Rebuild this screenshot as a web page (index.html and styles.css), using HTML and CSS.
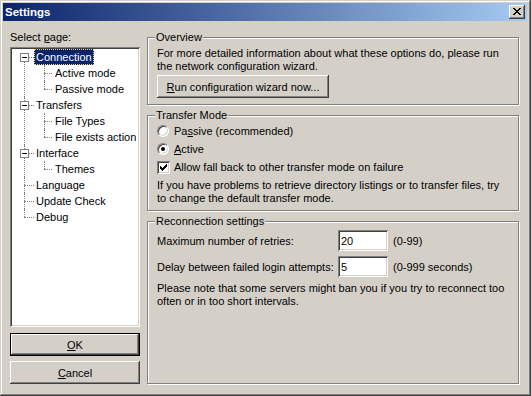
FILE: index.html
```html
<!DOCTYPE html>
<html lang="en">
<head>
  <meta charset="UTF-8" />
  <title>Settings</title>
  <link rel="stylesheet" href="styles.css">
</head>
<body>

<div class="window">
  <!-- Title bar -->
  <div class="titlebar">
    <span class="title">Settings</span>
    <button class="close" aria-label="Close">
      <svg width="8" height="7" viewBox="0 0 8 7" shape-rendering="crispEdges">
        <path d="M0 0h2v1h-2zM6 0h2v1h-2zM1 1h2v1h-2zM5 1h2v1h-2zM2 2h4v1h-4zM3 3h2v1h-2zM2 4h4v1h-4zM1 5h2v1h-2zM5 5h2v1h-2zM0 6h2v1h-2zM6 6h2v1h-2z" fill="#000"/>
      </svg>
    </button>
  </div>

  <div class="dialog">
    <!-- Left side: page tree and buttons -->
    <div class="side">
      <div class="side-label">Select <u>p</u>age:</div>
      <div class="tree">
        <ul class="roots">
          <li>
            <span class="exp"></span><span class="lbl sel">Connection</span>
            <ul class="kids">
              <li><span class="lbl">Active mode</span></li>
              <li><span class="lbl">Passive mode</span></li>
            </ul>
          </li>
          <li>
            <span class="exp"></span><span class="lbl">Transfers</span>
            <ul class="kids">
              <li><span class="lbl">File Types</span></li>
              <li><span class="lbl">File exists action</span></li>
            </ul>
          </li>
          <li>
            <span class="exp"></span><span class="lbl">Interface</span>
            <ul class="kids">
              <li><span class="lbl">Themes</span></li>
            </ul>
          </li>
          <li><span class="lbl">Language</span></li>
          <li><span class="lbl">Update Check</span></li>
          <li><span class="lbl">Debug</span></li>
        </ul>
      </div>
      <button class="btn btn-default"><u>O</u>K</button>
      <button class="btn btn-side"><u>C</u>ancel</button>
    </div>

    <!-- Right side: option groups -->
    <div class="main">
      <div class="group">
        <span class="group-title">Overview</span>
        <p class="note">For more detailed information about what these options do, please run<br>the network configuration wizard.</p>
        <button class="btn btn-wizard"><u>R</u>un configuration wizard now...</button>
      </div>

      <div class="group">
        <span class="group-title">Transfer Mode</span>
        <div class="option"><span class="radio"></span>Pa<u>s</u>sive (recommended)</div>
        <div class="option"><span class="radio checked"></span><u>A</u>ctive</div>
        <div class="option">
          <span class="check">
            <svg width="9" height="9" viewBox="0 0 9 9" shape-rendering="crispEdges">
              <path d="M6 1h1v1h-1zM5 2h2v1h-2zM0 3h1v1h-1zM4 3h3v1h-3zM0 4h2v1h-2zM3 4h3v1h-3zM0 5h5v1h-5zM1 6h3v1h-3zM2 7h1v1h-1z" fill="#000" transform="translate(1,0)"/>
            </svg>
          </span>Allow fall back to other transfer mode on failure
        </div>
        <p class="note">If you have problems to retrieve directory listings or to transfer files, try<br>to change the default transfer mode.</p>
      </div>

      <div class="group group-last">
        <span class="group-title">Reconnection settings</span>
        <div class="fields">
          <label>Maximum number of retries:</label>
          <input class="edit" type="text" value="20">
          <span class="range">(0-99)</span>
          <label>Delay between failed login attempts:</label>
          <input class="edit" type="text" value="5">
          <span class="range">(0-999 seconds)</span>
        </div>
        <p class="note note-gap">Please note that some servers might ban you if you try to reconnect too<br>often or in too short intervals.</p>
      </div>
    </div>
  </div>
</div>

</body>
</html>
```

FILE: styles.css
```css
body {
  margin: 0;
  background: #d4d0c8;
  font-family: 'Liberation Sans', Arial, sans-serif;
  font-size: 11px;
  color: #000;
}

.window {
  width: 531px;
  height: 396px;
  box-sizing: border-box;
  padding: 3px 4px 4px 3px;
  background: #d4d0c8;
  box-shadow: inset -1px -1px #404040, inset 1px 1px #d4d0c8,
              inset -2px -2px #808080, inset 2px 2px #fff;
  display: flex;
  flex-direction: column;
}

/* title bar */
.titlebar {
  height: 18px;
  display: flex;
  align-items: center;
  justify-content: space-between;
  padding: 0 2px;
  background: linear-gradient(to right, #0a246a, #a6caf0);
}

.title {
  color: #fff;
  font-weight: bold;
  font-size: 11.5px;
}

.close {
  width: 16px;
  height: 14px;
  padding: 0;
  border: none;
  background: #d4d0c8;
  display: flex;
  align-items: center;
  justify-content: center;
  box-shadow: inset -1px -1px #404040, inset 1px 1px #fff,
              inset -2px -2px #808080, inset 2px 2px #d4d0c8;
}

.close svg { display: block; margin-top: -1px; }

/* dialog body */
.dialog {
  flex: 1;
  display: grid;
  grid-template-columns: 130px 373px;
  column-gap: 7px;
  padding: 10px 7px 8px 7px;
}

.side {
  display: flex;
  flex-direction: column;
}

.side-label { line-height: 13px; }

.tree {
  height: 280px;
  margin-top: 3px;
  box-sizing: border-box;
  padding: 2px;
  background: #fff;
  box-shadow: inset 1px 1px #808080, inset -1px -1px #fff,
              inset 2px 2px #404040, inset -2px -2px #d4d0c8;
}

.tree ul {
  list-style: none;
  margin: 0;
  padding: 0;
}

.tree li {
  position: relative;
  line-height: 16px;
  white-space: nowrap;
}

.lbl {
  display: inline-block;
  height: 16px;
  padding: 0 2px;
}

.lbl.sel {
  background: #0a246a;
  color: #fff;
  outline: 1px dotted #e8d38c;
  outline-offset: -1px;
}

.roots > li { padding-left: 22px; }

.roots > li::before,
.kids > li::before {
  content: "";
  position: absolute;
  top: 0;
  bottom: 0;
  left: 12px;
  border-left: 1px dotted #808080;
}

.roots > li:first-child::before { top: 8px; }

.roots > li:last-child::before,
.kids > li:last-child::before {
  bottom: auto;
  height: 8px;
}

.roots > li::after,
.kids > li::after {
  content: "";
  position: absolute;
  top: 8px;
  left: 12px;
  width: 10px;
  border-top: 1px dotted #808080;
}

.kids > li { padding-left: 19px; }
.kids > li::before { left: 10px; }
.kids > li::after { left: 10px; width: 8px; }

.exp {
  position: absolute;
  left: 8px;
  top: 4px;
  width: 9px;
  height: 9px;
  box-sizing: border-box;
  border: 1px solid #808080;
  background: #fff;
  z-index: 1;
}

.exp::before {
  content: "";
  position: absolute;
  left: 1px;
  top: 3px;
  width: 5px;
  height: 1px;
  background: #000;
}

/* buttons */
.btn {
  height: 23px;
  padding: 0;
  border: none;
  background: #d4d0c8;
  font: inherit;
  color: #000;
  box-shadow: inset -1px -1px #404040, inset 1px 1px #fff,
              inset -2px -2px #808080, inset 2px 2px #d4d0c8;
}

.btn-default {
  margin-top: 6px;
  box-shadow: inset 0 0 0 1px #000, inset -2px -2px #404040, inset 2px 2px #fff,
              inset -3px -3px #808080;
}

.btn-side { margin-top: 5px; }

.btn-wizard {
  width: 172px;
  margin-top: 2px;
  align-self: flex-start;
}

/* group boxes */
.main {
  display: flex;
  flex-direction: column;
  gap: 10px;
  padding-top: 6px;
}

.group {
  width: 372px;
  box-sizing: border-box;
  border: 1px solid #808080;
  box-shadow: inset 1px 1px #fff, 1px 1px #fff;
  padding: 0 9px 5px 9px;
  display: flex;
  flex-direction: column;
}

.group:first-child { padding-bottom: 6px; }

.group-last { flex: 1; }

.group-title {
  align-self: flex-start;
  margin: -7px 0 0 -2px;
  padding: 0 1px;
  line-height: 13px;
  background: #d4d0c8;
}

.note {
  margin: 3px 0 0 0;
  line-height: 13px;
  white-space: nowrap;
}

.note-gap { margin-top: 5px; }

.option {
  height: 18px;
  display: flex;
  align-items: center;
}

.radio {
  width: 12px;
  height: 12px;
  box-sizing: border-box;
  margin-right: 5px;
  border-radius: 50%;
  background: #fff;
  border: 1px solid;
  border-color: #808080 #fff #fff #808080;
  box-shadow: inset 1px 1px #404040, inset -1px -1px #d4d0c8;
  display: flex;
  align-items: center;
  justify-content: center;
}

.radio.checked::before {
  content: "";
  width: 4px;
  height: 4px;
  border-radius: 50%;
  background: #000;
}

.check {
  width: 13px;
  height: 13px;
  box-sizing: border-box;
  margin-right: 4px;
  padding: 2px;
  background: #fff;
  box-shadow: inset 1px 1px #808080, inset -1px -1px #fff,
              inset 2px 2px #404040, inset -2px -2px #d4d0c8;
}

.check svg { display: block; }

.fields {
  display: grid;
  grid-template-columns: 181px 50px auto;
  row-gap: 5px;
  align-items: center;
  margin-top: 2px;
  white-space: nowrap;
}

.range { padding-left: 5px; }

.edit {
  width: 50px;
  height: 21px;
  box-sizing: border-box;
  margin: 0;
  padding: 0 3px;
  border: none;
  background: #fff;
  font: inherit;
  color: #000;
  box-shadow: inset 1px 1px #808080, inset -1px -1px #fff,
              inset 2px 2px #404040, inset -2px -2px #d4d0c8;
}
```
